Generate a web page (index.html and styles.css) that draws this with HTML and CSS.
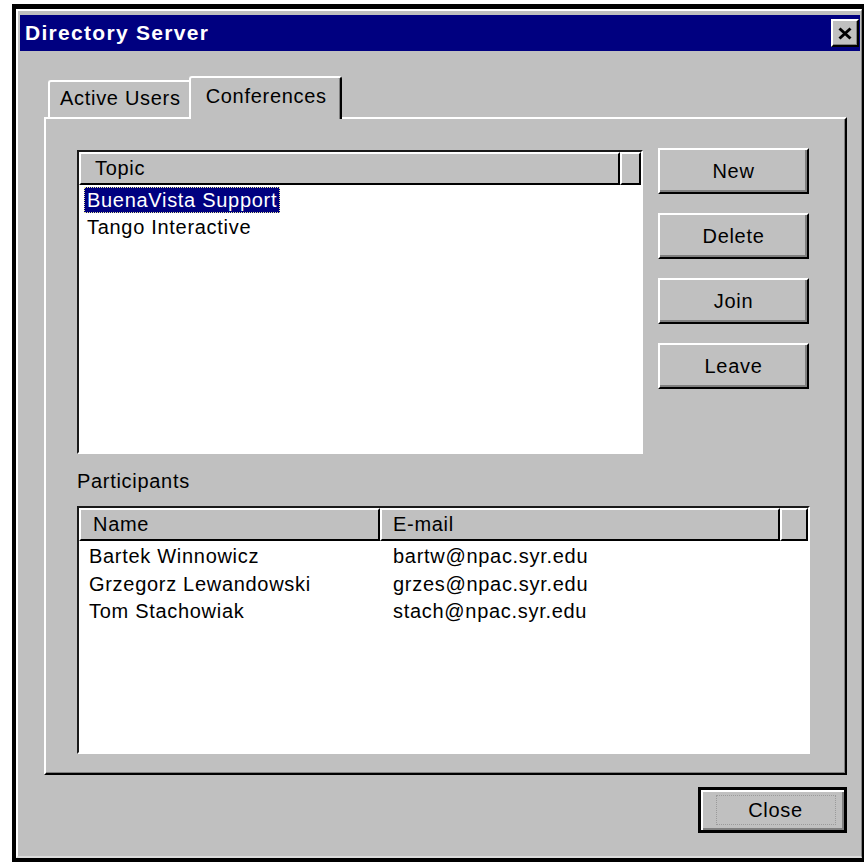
FILE: index.html
```html
<!DOCTYPE html>
<html lang="en">
<head>
<meta charset="utf-8">
<title>Directory Server</title>
<link rel="stylesheet" href="styles.css">
</head>
<body>
<div class="window">
  <div class="frame">
    <div class="titlebar">
      <span class="title">Directory Server</span>
      <button class="title-close" aria-label="Close">
        <svg width="14" height="13" viewBox="0 0 14 13"><path d="M1.5 1.5L12.5 11.5M12.5 1.5L1.5 11.5" stroke="#000" stroke-width="3" fill="none"/></svg>
      </button>
    </div>
    <div class="client">
      <div class="tabs">
        <div class="tab">Active Users</div>
        <div class="tab tab-active">Conferences</div>
      </div>
      <div class="panel">
        <div class="conf-row">
          <div class="listview topics">
            <div class="lv-head">
              <div class="lv-col col-topic">Topic</div>
              <div class="lv-col lv-fill"></div>
            </div>
            <div class="lv-rows">
              <div class="lv-row topic-row"><span class="cell selected">BuenaVista Support</span></div>
              <div class="lv-row topic-row"><span class="cell">Tango Interactive</span></div>
            </div>
          </div>
          <div class="actions">
            <button class="btn">New</button>
            <button class="btn">Delete</button>
            <button class="btn">Join</button>
            <button class="btn">Leave</button>
          </div>
        </div>
        <div class="group-label">Participants</div>
        <div class="listview participants">
          <div class="lv-head">
            <div class="lv-col col-name">Name</div>
            <div class="lv-col col-email">E-mail</div>
            <div class="lv-col lv-fill"></div>
          </div>
          <div class="lv-rows">
            <div class="lv-row person-row"><span class="cell p-name">Bartek Winnowicz</span><span class="cell p-email">bartw@npac.syr.edu</span></div>
            <div class="lv-row person-row"><span class="cell p-name">Grzegorz Lewandowski</span><span class="cell p-email">grzes@npac.syr.edu</span></div>
            <div class="lv-row person-row"><span class="cell p-name">Tom Stachowiak</span><span class="cell p-email">stach@npac.syr.edu</span></div>
          </div>
        </div>
      </div>
      <div class="footer">
        <button class="btn btn-default"><span class="focus">Close</span></button>
      </div>
    </div>
  </div>
</div>
</body>
</html>
```
FILE: styles.css
```css
* {
  box-sizing: border-box;
}

html,
body {
  margin: 0;
  background: #fff;
}

body {
  font-family: "Liberation Sans", Arial, sans-serif;
  font-size: 20px;
  letter-spacing: 0.7px;
  color: #000;
}

/* Outer window with its dark edge */
.window {
  margin: 4px 0 0 12px;
  width: 852px;
  height: 858px;
  background: #000;
  padding: 5px 2px 4px 4px;
}

.frame {
  height: 100%;
  background: #c0c0c0;
  border-top: 2px solid #fff;
  border-left: 2px solid #fff;
  border-right: 1px solid #808080;
  border-bottom: 2px solid #dcdcdc;
  padding: 4px 1px 0 2px;
}

/* Caption bar */
.titlebar {
  height: 36px;
  background: #000080;
  display: flex;
  align-items: center;
  justify-content: space-between;
  padding: 0 1px 0 5px;
}

.title {
  color: #fff;
  font-weight: bold;
  font-size: 21px;
  letter-spacing: 1.3px;
  line-height: 36px;
}

.title-close {
  width: 28px;
  height: 28px;
  padding: 0;
  margin: 0;
  background: #c0c0c0;
  border: 2px solid;
  border-color: #fff #000 #000 #fff;
  box-shadow: inset -1px -1px 0 #808080;
  display: flex;
  align-items: center;
  justify-content: center;
}

/* Dialog contents */
.client {
  padding: 25px 13px 0 24px;
}

.tabs {
  display: flex;
  align-items: flex-end;
  height: 41px;
  padding-left: 4px;
}

.tab {
  height: 37px;
  padding: 3px 10px 0 10px;
  line-height: 26px;
  background: #c0c0c0;
  border-top: 2px solid #fff;
  border-left: 2px solid #fff;
  border-right: 2px solid #000;
  border-radius: 3px 3px 0 0;
  box-shadow: inset -1px 0 0 #808080;
}

.tab-active {
  position: relative;
  z-index: 1;
  height: 43px;
  margin-left: -4px;
  margin-bottom: -2px;
  padding: 5px 13px 0 15px;
}

.panel {
  border: 2px solid;
  border-color: #fff #000 #000 #fff;
  box-shadow: inset -1px -1px 0 #808080;
  padding: 31px 36px 19px 31px;
}

.conf-row {
  display: flex;
  align-items: flex-start;
}

/* List views */
.listview {
  background: #fff;
  border: 2px solid;
  border-color: #1a1a1a #fff #fff #1a1a1a;
  overflow: hidden;
}

.topics {
  width: 566px;
  height: 304px;
}

.participants {
  width: 733px;
  height: 248px;
}

.lv-head {
  display: flex;
  height: 33px;
  background: #c0c0c0;
}

.lv-col {
  height: 33px;
  line-height: 28px;
  padding-left: 12px;
  border: 2px solid;
  border-color: #fff #000 #000 #fff;
}

.col-topic {
  width: 541px;
  padding-left: 14px;
}

.col-name {
  width: 301px;
}

.col-email {
  width: 400px;
  padding-left: 11px;
}

.lv-fill {
  flex: 1;
}

.lv-rows {
  padding-top: 2px;
}

.topic-row {
  height: 27px;
  line-height: 27px;
  padding-left: 5px;
}

.topic-row .cell {
  display: inline-block;
  height: 26px;
  line-height: 26px;
  padding: 0 3px;
}

.selected {
  background: #000080;
  color: #fff;
  outline: 1px dotted #e8e8a0;
  outline-offset: -1px;
}

.person-row {
  display: grid;
  grid-template-columns: 301px 400px;
  height: 27.5px;
  line-height: 27px;
}

.p-name {
  padding-left: 10px;
  white-space: nowrap;
}

.p-email {
  padding-left: 13px;
  white-space: nowrap;
}

/* Command buttons */
.actions {
  display: flex;
  flex-direction: column;
  gap: 19px;
  width: 151px;
  margin-left: 15px;
  margin-top: -2px;
}

.btn {
  height: 46px;
  padding: 0;
  font: inherit;
  letter-spacing: inherit;
  color: #000;
  background: #c0c0c0;
  border: 2px solid;
  border-color: #fff #000 #000 #fff;
  box-shadow: inset -2px -2px 0 #808080;
}

.group-label {
  margin-top: 14px;
  height: 26px;
  line-height: 26px;
  margin-bottom: 12px;
}

.footer {
  display: flex;
  justify-content: flex-end;
  padding-top: 12px;
}

.btn-default {
  width: 149px;
  border: 3px solid #000;
  box-shadow: inset 2px 2px 0 #fff, inset -2px -2px 0 #808080;
  display: flex;
  align-items: center;
  justify-content: center;
}

.focus {
  display: block;
  width: 118px;
  height: 28px;
  line-height: 28px;
  outline: 1px dotted #9a9a9a;
  text-align: center;
  margin-left: 6px;
}
```
